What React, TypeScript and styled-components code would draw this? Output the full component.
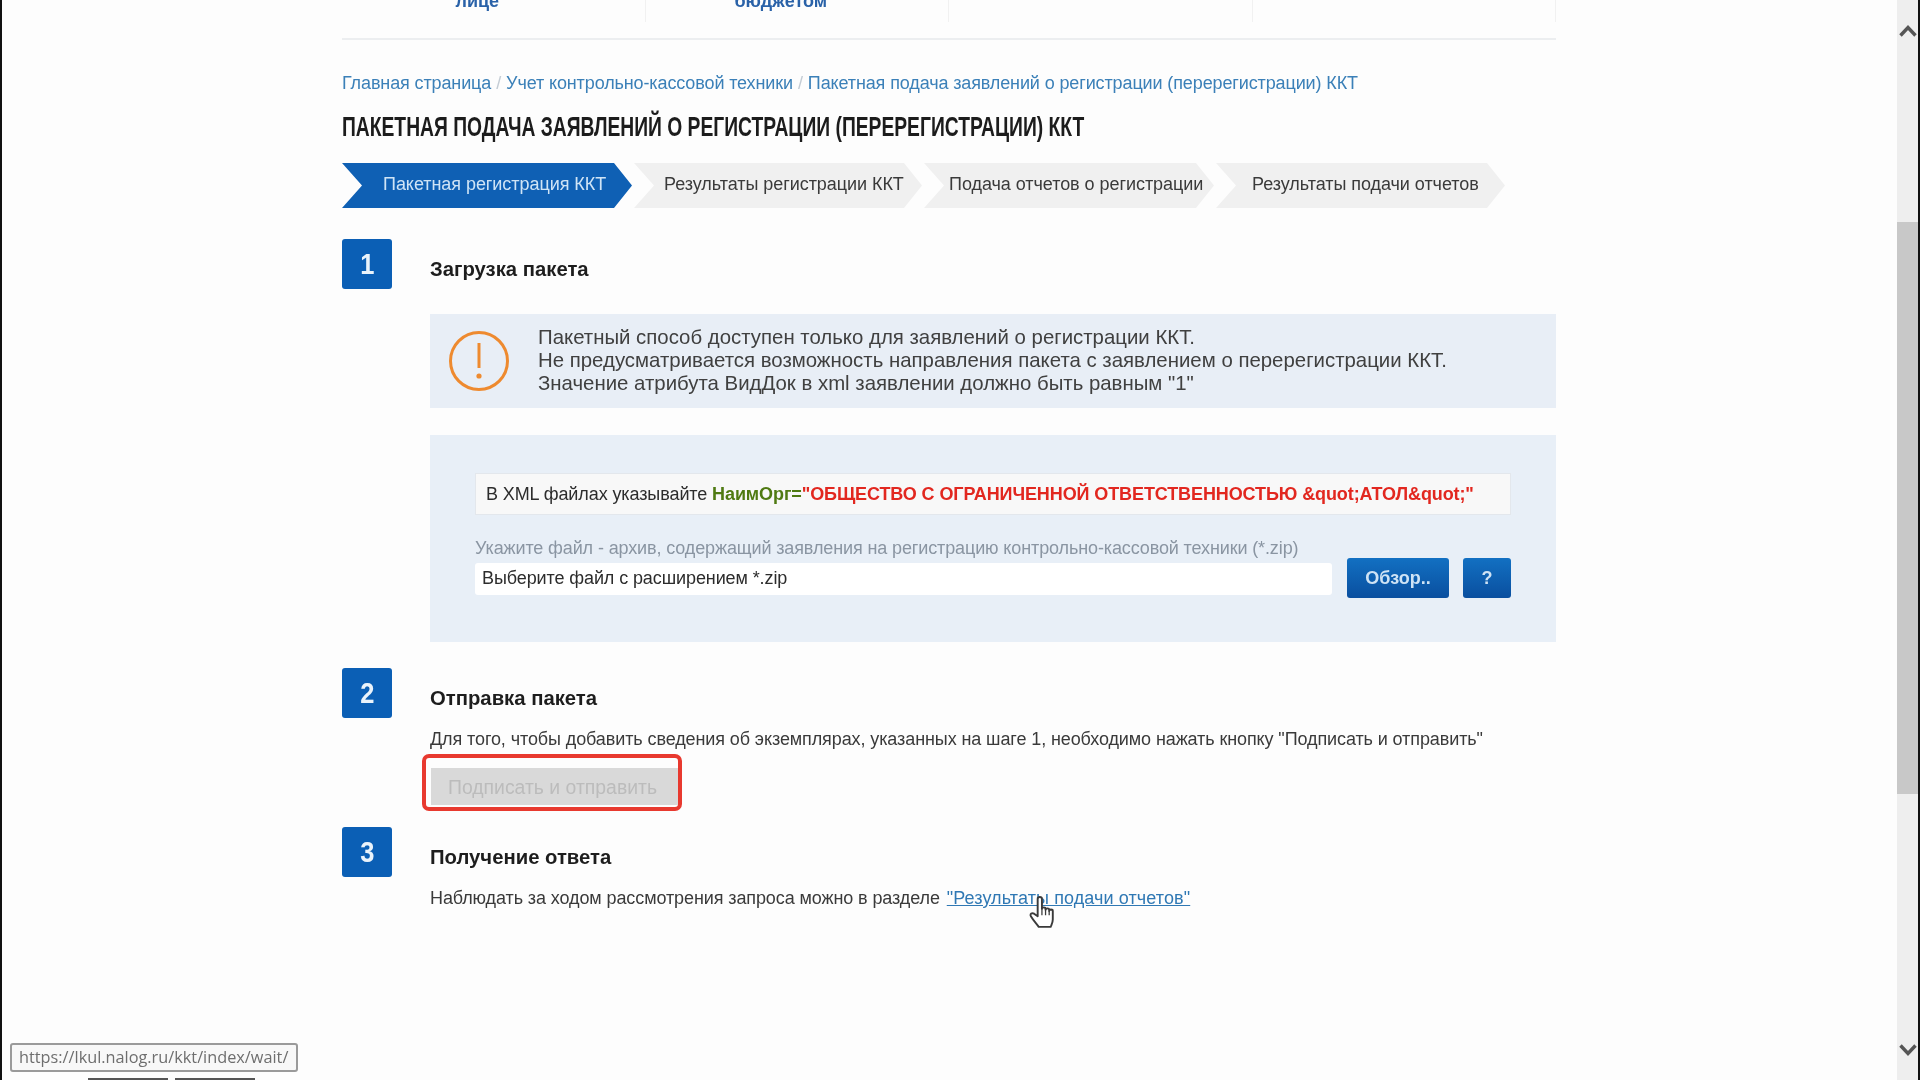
import React from 'react';
import styled, { createGlobalStyle } from 'styled-components';

const GlobalStyle = createGlobalStyle`
  html, body { margin: 0; padding: 0; background: #fdfdfd; }
  body { font-family: "Liberation Sans", Arial, sans-serif; overflow: hidden; }
  * { box-sizing: border-box; }
`;

const Screen = styled.div`
  position: relative;
  display: flex;
  width: 1920px;
  height: 1080px;
  overflow: hidden;
  background: #fdfdfd;
  border-left: 2px solid #111;
  border-right: 2px solid #111;
  filter: blur(0.5px);
`;

const Page = styled.main`
  flex: 1;
  padding-left: 340px;
`;

const Content = styled.div`
  width: 1214px;
`;

const TopNav = styled.nav`
  display: grid;
  grid-template-columns: repeat(4, 1fr);
  height: 40px;
  border-bottom: 2px solid #eceef0;
`;

const NavCell = styled.div`
  height: 22px;
  padding-right: 32px;
  border-right: 1px solid #f1f1f1;
  text-align: center;
  font-size: 18px;
  font-weight: 700;
  line-height: 18px;
  color: #2a62a8;
  overflow: hidden;
  & > span { display: block; margin-top: -8px; }
`;

const Breadcrumbs = styled.div`
  margin-top: 32px;
  height: 22px;
  font-size: 18px;
  line-height: 22px;
  letter-spacing: -0.12px;
  color: #3b80b8;
  white-space: nowrap;
`;

const Crumb = styled.a`
  color: #3b80b8;
`;

const Slash = styled.span`
  margin: 0 5px;
  color: #c4ccd4;
`;

// the site's condensed heading face is not installed, so Liberation is squeezed to the same width
const Title = styled.h1`
  margin: 16px 0 0;
  height: 34px;
  font-size: 28px;
  font-weight: 700;
  line-height: 34px;
  color: #1c1c1c;
  white-space: nowrap;
  transform: scaleX(0.688);
  transform-origin: left center;
`;

const Tabs = styled.div`
  display: flex;
  margin-top: 19px;
  gap: 2px;
`;

const Tab = styled.div<{ $active?: boolean; $width: number; $pad: number }>`
  width: ${p => p.$width}px;
  height: 45px;
  padding-left: ${p => p.$pad}px;
  background: ${p => (p.$active ? '#0f60b4' : '#f0f0f0')};
  color: ${p => (p.$active ? '#cfe4f6' : '#3a3a3a')};
  clip-path: polygon(0 0, calc(100% - 18px) 0, 100% 50%, calc(100% - 18px) 100%, 0 100%, 20px 50%);
  font-size: 18px;
  line-height: 42px;
  letter-spacing: -0.05px;
  white-space: nowrap;
`;

const Step = styled.section<{ $top: number }>`
  display: grid;
  grid-template-columns: 50px 1fr;
  column-gap: 38px;
  margin-top: ${p => p.$top}px;
`;

const StepNumber = styled.div`
  width: 50px;
  height: 50px;
  border-radius: 3px;
  background: #0b5fb5;
  color: #eaf3fb;
  font-size: 30px;
  font-weight: 700;
  line-height: 49px;
  text-align: center;
  & > span { display: inline-block; transform: scaleX(0.85); }
`;

const StepHeading = styled.h2`
  margin: 18px 0 0;
  height: 24px;
  font-size: 20.3px;
  font-weight: 700;
  line-height: 24px;
  color: #1d1d1d;
`;

const InfoBox = styled.div`
  display: flex;
  align-items: center;
  height: 94px;
  margin-top: 33px;
  padding-left: 19px;
  background: #e8eef6;
`;

const InfoText = styled.div`
  margin-left: 29px;
  margin-top: -1px;
  font-size: 20.4px;
  line-height: 23px;
  color: #404040;
  white-space: nowrap;
`;

const FormPanel = styled.div`
  height: 207px;
  margin-top: 27px;
  padding: 38px 45px 0;
  background: #e8eff7;
`;

const XmlHint = styled.div`
  height: 42px;
  padding-left: 10px;
  background: #f8f8f8;
  border: 1px solid #e3e7ec;
  font-size: 18px;
  line-height: 40px;
  color: #2c2c2c;
  letter-spacing: -0.1px;
  white-space: nowrap;
`;

const OrgTag = styled.b`
  color: #4f7a12;
`;

const OrgName = styled.b`
  color: #e2271f;
`;

const FileLabel = styled.div`
  margin-top: 23px;
  height: 20px;
  font-size: 18px;
  line-height: 20px;
  letter-spacing: -0.12px;
  color: #8a95a2;
  white-space: nowrap;
`;

const FileRow = styled.div`
  display: flex;
  align-items: flex-start;
  height: 40px;
`;

const FileInput = styled.div`
  width: 857px;
  height: 32px;
  margin-top: 5px;
  padding-left: 7px;
  background: #fff;
  border-radius: 3px;
  font-size: 18px;
  line-height: 30px;
  letter-spacing: -0.1px;
  color: #2c2c2c;
`;

const BlueButton = styled.button<{ $width: number; $gap: number }>`
  width: ${p => p.$width}px;
  height: 40px;
  margin-left: ${p => p.$gap}px;
  padding: 0;
  border: 0;
  border-radius: 3px;
  background: linear-gradient(#1270c2, #0a4f9f);
  color: #cfe3f5;
  font-family: inherit;
  font-size: 18px;
  font-weight: 700;
`;

const BodyText = styled.p`
  margin: 17px 0 0;
  height: 24px;
  font-size: 18px;
  line-height: 24px;
  letter-spacing: -0.1px;
  color: #3a3a3a;
  white-space: nowrap;
`;

const ResultLink = styled.a`
  margin-left: 2px;
  color: #2f78b4;
  letter-spacing: 0.1px;
  text-decoration: underline;
`;

const SendOutline = styled.div`
  width: 260px;
  height: 57px;
  margin: 3px 0 0 -8px;
  padding: 10px 0 0 5px;
  border: 4px solid #e8392f;
  border-radius: 7px;
`;

const DisabledButton = styled.div`
  width: 247px;
  height: 37px;
  padding-right: 4px;
  background: #d9d9d9;
  color: #bcbcbc;
  font-size: 19.4px;
  line-height: 39px;
  text-align: center;
  white-space: nowrap;
`;

const ScrollTrack = styled.aside`
  display: flex;
  flex-direction: column;
  align-items: center;
  width: 21px;
  background: #eeeeee;
`;

const ScrollThumb = styled.div`
  width: 100%;
  height: 572px;
  margin: 184px 0 242px;
  background: #c8c8c8;
`;

const ScrollArrow = styled.svg`
  flex: none;
  width: 18px;
  height: 14px;
  fill: none;
  stroke: #555;
  stroke-width: 3.4;
  margin-top: 24px;
`;

const ScrollArrowDown = styled(ScrollArrow)`
  margin-top: 7px;
`;

const StatusBubble = styled.div`
  position: absolute;
  left: 8px;
  top: 1043px;
  width: 288px;
  height: 29px;
  padding-left: 7px;
  background: #f8f8f8;
  border: 2px solid #9a9a9a;
  border-radius: 3px;
  font-family: "Open Sans", sans-serif;
  font-size: 16.3px;
  line-height: 25px;
  color: #6e6e6e;
  white-space: nowrap;
`;

const BottomEdge = styled.div`
  position: absolute;
  left: 86px;
  bottom: 0;
  display: flex;
  gap: 7px;
`;

const EdgeSegment = styled.div`
  width: 80px;
  height: 2px;
  background: #555;
`;

const HandCursor = styled.svg`
  position: absolute;
  left: 1027px;
  top: 896px;
  width: 28px;
  height: 33px;
  fill: #fff;
  stroke: #3a3a3a;
  stroke-width: 1.8;
  stroke-linejoin: round;
`;

const AlertIcon = () => (
  <svg width="60" height="60" viewBox="0 0 60 60">
    <circle cx="30" cy="30" r="28.5" fill="none" stroke="#ee8a2f" strokeWidth="3" />
    <path d="M30 12v25" stroke="#ee8a2f" strokeWidth="3" />
    <circle cx="30" cy="45" r="2.6" fill="#ee8a2f" />
  </svg>
);

const navItems = ['лице', 'бюджетом', '', ''];

const tabs = [
  { label: 'Пакетная регистрация ККТ', width: 290, pad: 41, active: true },
  { label: 'Результаты регистрации ККТ', width: 288, pad: 30 },
  { label: 'Подача отчетов о регистрации', width: 290, pad: 25 },
  { label: 'Результаты подачи отчетов', width: 289, pad: 36 },
];

export default function App() {
  return (
    <>
      <GlobalStyle />
      <Screen>
        <Page>
          <Content>
            <TopNav>
              {navItems.map((item, i) => (
                <NavCell key={i}>
                  <span>{item}</span>
                </NavCell>
              ))}
            </TopNav>

            <Breadcrumbs>
              <Crumb>Главная страница</Crumb>
              <Slash>/</Slash>
              <Crumb>Учет контрольно-кассовой техники</Crumb>
              <Slash>/</Slash>
              <Crumb>Пакетная подача заявлений о регистрации (перерегистрации) ККТ</Crumb>
            </Breadcrumbs>

            <Title>ПАКЕТНАЯ ПОДАЧА ЗАЯВЛЕНИЙ О РЕГИСТРАЦИИ (ПЕРЕРЕГИСТРАЦИИ) ККТ</Title>

            <Tabs>
              {tabs.map(tab => (
                <Tab key={tab.label} $active={tab.active} $width={tab.width} $pad={tab.pad}>
                  {tab.label}
                </Tab>
              ))}
            </Tabs>

            <Step $top={31}>
              <StepNumber><span>1</span></StepNumber>
              <div>
                <StepHeading>Загрузка пакета</StepHeading>
                <InfoBox>
                  <AlertIcon />
                  <InfoText>
                    Пакетный способ доступен только для заявлений о регистрации ККТ.
                    <br />
                    Не предусматривается возможность направления пакета с заявлением о перерегистрации ККТ.
                    <br />
                    Значение атрибута ВидДок в xml заявлении должно быть равным "1"
                  </InfoText>
                </InfoBox>
                <FormPanel>
                  <XmlHint>
                    В XML файлах указывайте <OrgTag>НаимОрг=</OrgTag>
                    <OrgName>"ОБЩЕСТВО С ОГРАНИЧЕННОЙ ОТВЕТСТВЕННОСТЬЮ &amp;quot;АТОЛ&amp;quot;"</OrgName>
                  </XmlHint>
                  <FileLabel>
                    Укажите файл - архив, содержащий заявления на регистрацию контрольно-кассовой техники (*.zip)
                  </FileLabel>
                  <FileRow>
                    <FileInput>Выберите файл с расширением *.zip</FileInput>
                    <BlueButton $width={102} $gap={15}>Обзор..</BlueButton>
                    <BlueButton $width={48} $gap={14}>?</BlueButton>
                  </FileRow>
                </FormPanel>
              </div>
            </Step>

            <Step $top={26}>
              <StepNumber><span>2</span></StepNumber>
              <div>
                <StepHeading>Отправка пакета</StepHeading>
                <BodyText>
                  Для того, чтобы добавить сведения об экземплярах, указанных на шаге 1, необходимо нажать кнопку "Подписать и отправить"
                </BodyText>
                <SendOutline>
                  <DisabledButton>Подписать и отправить</DisabledButton>
                </SendOutline>
              </div>
            </Step>

            <Step $top={16}>
              <StepNumber><span>3</span></StepNumber>
              <div>
                <StepHeading>Получение ответа</StepHeading>
                <BodyText>
                  Наблюдать за ходом рассмотрения запроса можно в разделе{' '}
                  <ResultLink>"Результаты подачи отчетов"</ResultLink>
                </BodyText>
              </div>
            </Step>
          </Content>
        </Page>

        <ScrollTrack>
          <ScrollArrow viewBox="0 0 18 14">
            <path d="M1.5 11.5 9 3.5l7.5 8" />
          </ScrollArrow>
          <ScrollThumb />
          <ScrollArrowDown viewBox="0 0 18 14">
            <path d="M1.5 2.5 9 10.5l7.5-8" />
          </ScrollArrowDown>
        </ScrollTrack>

        <StatusBubble>https://lkul.nalog.ru/kkt/index/wait/</StatusBubble>

        <BottomEdge>
          <EdgeSegment />
          <EdgeSegment />
        </BottomEdge>

        <HandCursor viewBox="0 0 26 31">
          <path d="M8 2.8c0-2.4 4-2.4 4 0V12c0-1.8 3.4-1.8 3.4 0v1c0-1.8 3.4-1.8 3.4 0v1c0-1.8 3.4-1.8 3.4 0v8c0 3-1 4.5-2 7H9c-2-3-5-6-7.4-10-1-2.2 1-3.6 3-2.4L8 19Z" />
          <path d="M12 12v6M15.4 13v5M18.8 14v4" fill="none" strokeWidth="1.2" />
        </HandCursor>
      </Screen>
    </>
  );
}
